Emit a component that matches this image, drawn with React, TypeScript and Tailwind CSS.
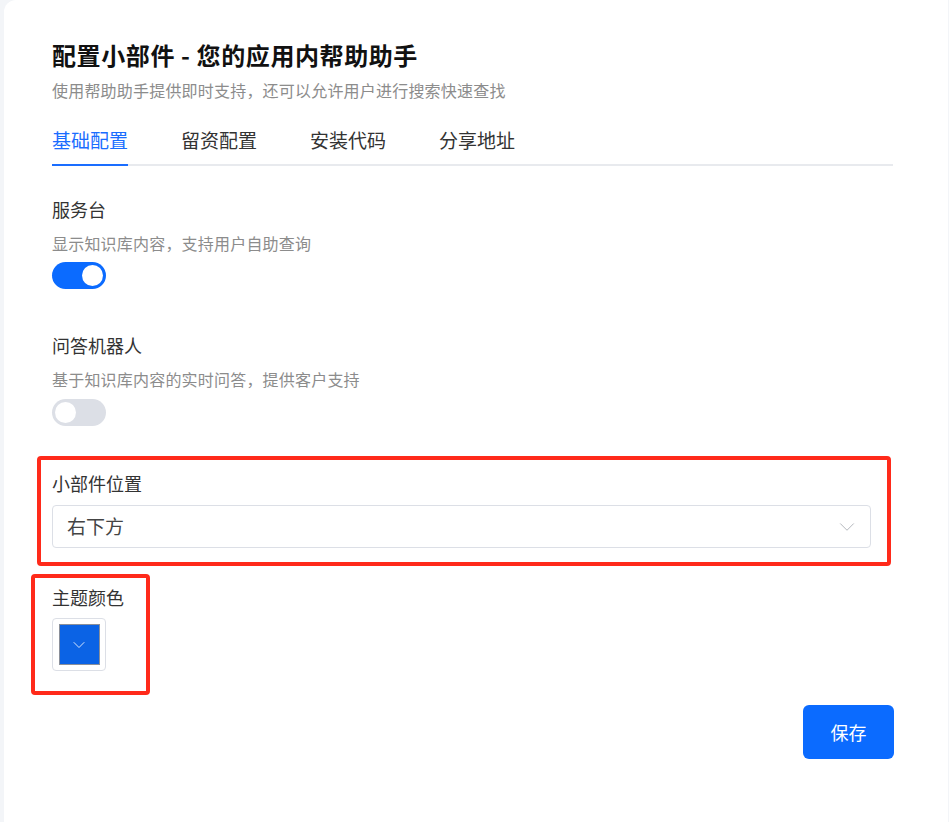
import { useState } from 'react';
import { ChevronDown } from 'lucide-react';

const tabs = ['基础配置', '留资配置', '安装代码', '分享地址'];

function Toggle({ on, onClick }: { on: boolean; onClick: () => void }) {
  return (
    <button
      type="button"
      onClick={onClick}
      className={`flex h-[27px] w-[54px] items-center rounded-full p-[3px] ${
        on ? 'justify-end bg-[#0b6bff]' : 'justify-start bg-[#dcdfe6]'
      }`}
    >
      <span className="h-[21px] w-[21px] rounded-full bg-white" />
    </button>
  );
}

export default function App() {
  const [active, setActive] = useState(0);
  const [desk, setDesk] = useState(true);
  const [bot, setBot] = useState(false);

  return (
    <div
      className="flex min-h-screen bg-[#f3f5f8] pl-[4px] pr-px"
      style={{ fontFamily: '"Noto Sans CJK SC", "Noto Sans", sans-serif' }}
    >
      <div className="flex-1 rounded-tl-xl bg-white pl-[48px] pr-[55px] pt-[39px]">
        <h1 className="text-[24px] font-bold leading-[32px] tracking-[0.6px] text-[#111]">
          配置小部件 - 您的应用内帮助助手
        </h1>
        <p className="mt-[7px] text-[16px] leading-[24px] tracking-[0.2px] text-[#8c8c8c]">
          使用帮助助手提供即时支持，还可以允许用户进行搜索快速查找
        </p>

        <div className="mt-[26px] flex gap-[53px] border-b-2 border-[#e8eaee]">
          {tabs.map((t, i) => (
            <button
              key={t}
              type="button"
              onClick={() => setActive(i)}
              className={`-mb-[2px] w-[76px] border-b-2 pb-[12px] text-left text-[19px] leading-[24px] ${
                i === active ? 'border-[#1a6dff] text-[#1a6dff]' : 'border-transparent text-[#333]'
              }`}
            >
              {t}
            </button>
          ))}
        </div>

        <div className="mt-[30px] text-[18px] leading-[26px] text-[#333]">服务台</div>
        <div className="mt-[9px] text-[16px] leading-[24px] tracking-[0.2px] text-[#8c8c8c]">
          显示知识库内容，支持用户自助查询
        </div>
        <div className="mt-[7px]">
          <Toggle on={desk} onClick={() => setDesk(!desk)} />
        </div>

        <div className="mt-[43px] text-[18px] leading-[26px] text-[#333]">问答机器人</div>
        <div className="mt-[9px] text-[16px] leading-[24px] tracking-[0.2px] text-[#8c8c8c]">
          基于知识库内容的实时问答，提供客户支持
        </div>
        <div className="mt-[8px]">
          <Toggle on={bot} onClick={() => setBot(!bot)} />
        </div>

        <div className="relative mt-[44px]">
          <div className="text-[18px] leading-[26px] text-[#333]">小部件位置</div>
          <div className="mt-[9px] mr-[22px] flex h-[43px] items-center justify-between rounded-[4px] border border-[#dcdfe6] pl-[14px] pr-[10px]">
            <span className="text-[19px] text-[#444]">右下方</span>
            <ChevronDown size={26} strokeWidth={0.8} className="text-[#a8abb2]" />
          </div>
          <div className="pointer-events-none absolute -bottom-[18px] -left-[15px] -top-[14px] right-[2px] rounded-[4px] border-4 border-[#ff2a1a]" />
        </div>

        <div className="relative mt-[36px] w-fit">
          <div className="text-[18px] leading-[26px] text-[#333]">主题颜色</div>
          <div className="mt-[8px] flex h-[53px] w-[54px] items-center justify-center rounded-[4px] border border-[#dcdfe6]">
            <div className="flex h-[41px] w-[41px] items-center justify-center border border-[#8a8f99] bg-[#0b63e5]">
              <ChevronDown size={20} strokeWidth={1} className="text-white" />
            </div>
          </div>
          <div className="pointer-events-none absolute -bottom-[24px] -left-[21px] -top-[10px] w-[119px] rounded-[4px] border-4 border-[#ff2a1a]" />
        </div>

        <div className="mt-[34px] flex justify-end">
          <button
            type="button"
            className="mr-[-1px] h-[54px] w-[91px] rounded-md bg-[#0b6bff] text-[18px] text-white"
          >
            保存
          </button>
        </div>
      </div>
    </div>
  );
}
